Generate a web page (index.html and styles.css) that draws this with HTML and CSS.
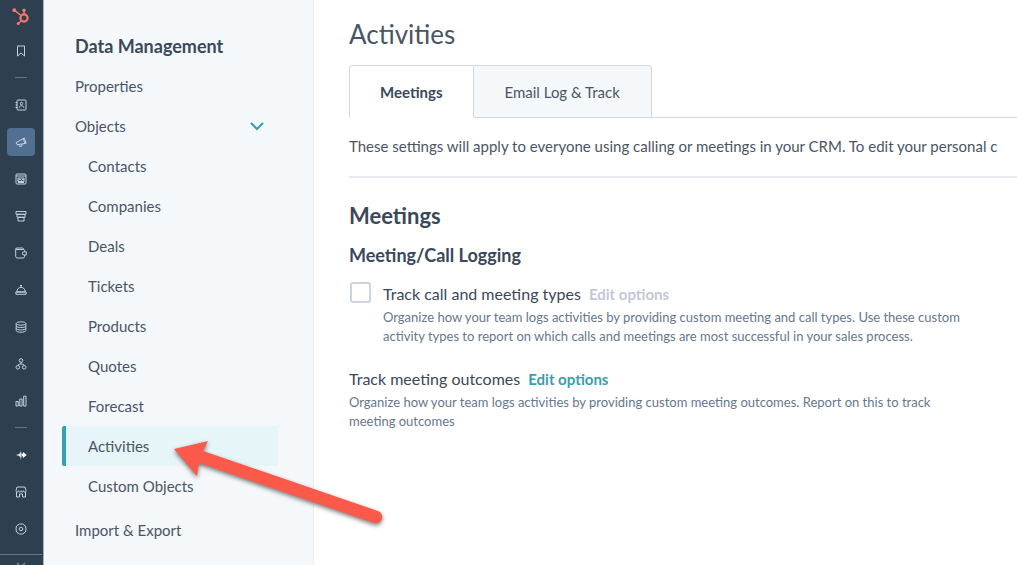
FILE: index.html
```html
<!DOCTYPE html>
<html lang="en">
<head>
    <meta charset="UTF-8">
    <meta name="viewport" content="width=device-width, initial-scale=1.0">
    <title>Activities - Data Management</title>
    <link rel="stylesheet" href="styles.css">
</head>
<body>
    <div class="app">
        <nav class="rail" aria-label="Main">
            <a class="logo" href="#" aria-label="Home">
                <svg width="18" height="18" viewBox="0 0 18 18" fill="none" stroke="#f8766a">
                    <circle cx="12" cy="10" r="3.6" stroke-width="2.2"/>
                    <path d="M12 6.2V2.5M9 7.5L2.5 2.3M9.3 12.8L6.5 15.2" stroke-width="1.5"/>
                    <g fill="#f8766a" stroke="none"><circle cx="12" cy="2.2" r="1.7"/><circle cx="2.3" cy="2.2" r="1.9"/><circle cx="6.2" cy="15.6" r="1.5"/></g>
                </svg>
            </a>
            <a class="rail-item" href="#" aria-label="Bookmarks"><svg class="icon" viewBox="0 0 12 12"><path d="M2.5 1h7v10L6 8 2.5 11z"/></svg></a>
            <hr class="rail-divider">
            <a class="rail-item" href="#" aria-label="CRM"><svg class="icon" viewBox="0 0 12 12"><rect x="2" y="1" width="9" height="10" rx="1"/><circle cx="6.5" cy="4.5" r="1.2"/><path d="M4.2 8.8c.2-2.8 4.4-2.8 4.600 0M.5 3.500h2M.5 6h2M.5 8.500h2"/></svg></a>
            <a class="rail-item" href="#" aria-label="Marketing"><span class="rail-active"><svg class="icon" viewBox="0 0 12 12"><path d="M1 6.600L9.300 2l1.900 5.300-9.100 1.400zM4 8.500l.6 2 2.500-.6-.4-1.800M8.300 2.700l1.600 4.700"/></svg></span></a>
            <a class="rail-item" href="#" aria-label="Content"><svg class="icon" viewBox="0 0 12 12"><rect x="1" y="1" width="10" height="10" rx="1"/><path d="M1 3h10M3 8.500V5h6v3.500zM3 8l2-2 1.500 1.500L8 6l1 1M3 9.500h6"/></svg></a>
            <a class="rail-item" href="#" aria-label="Sales"><svg class="icon" viewBox="0 0 12 12"><path d="M1 1.500h10v2.800H1zM2 4.300h8v3H2zM3 7.300h6V11H3z"/></svg></a>
            <a class="rail-item" href="#" aria-label="Commerce"><svg class="icon" viewBox="0 0 12 12"><path d="M9.500 4.800V3.500Q9.500 2.500 8.500 2.500H2Q.7 2.500.7 1.700M8.500 2.500Q8.500 1 7.500 1H2Q.7 1 .7 2.200v7.300Q.7 11 2.200 11h6q1.300 0 1.300-1.500V8M11.300 4.800H9a1.600 1.600 0 0 0 0 3.200h2.300z"/></svg></a>
            <a class="rail-item" href="#" aria-label="Service"><svg class="icon" viewBox="0 0 12 12"><path d="M1.800 8C2 1.800 10 1.800 10.200 8zM.9 8h10.200v2.300H.9zM6 3.200V1.500M5 1.500h2"/></svg></a>
            <a class="rail-item" href="#" aria-label="Data"><svg class="icon" viewBox="0 0 12 12"><ellipse cx="6" cy="2.500" rx="4.800" ry="1.700"/><path d="M1.200 2.500v7C1.200 11.800 10.800 11.800 10.800 9.500v-7M1.200 5c0 2 9.600 2 9.600 0M1.200 7.400c0 2 9.600 2 9.600 0"/></svg></a>
            <a class="rail-item" href="#" aria-label="Automation"><svg class="icon" viewBox="0 0 12 12"><circle cx="6" cy="2.500" r="1.800"/><circle cx="2.800" cy="9.300" r="1.800"/><circle cx="9.200" cy="9.300" r="1.800"/><path d="M6 4.300v1.700M2.800 7.500C3 6.200 4.500 6 6 6s3 .2 3.200 1.500"/></svg></a>
            <a class="rail-item" href="#" aria-label="Reporting"><svg class="icon" viewBox="0 0 12 12"><path d="M1 6.500h2.300V11H1zM4.800 4h2.300v7H4.800zM8.700 1.200H11V11H8.700z"/></svg></a>
            <hr class="rail-divider">
            <a class="rail-item" href="#" aria-label="Assistant"><svg class="icon" viewBox="0 0 12 12"><path class="solid" d="M5.800 0C5.800 4.800 4.500 5.500.5 6c4 .5 5.300 1.200 5.300 6zM6.500 2v8C6.700 8 7.200 7.200 8 7v2l3.800-3L8 3v2C7.200 4.800 6.700 4 6.500 2z"/></svg></a>
            <a class="rail-item" href="#" aria-label="Marketplace"><svg class="icon" viewBox="0 0 12 12"><path d="M2 1h8l1 3.500c0 2-2.500 2-2.500.2 0 1.800-2.500 1.800-2.500 0 0 1.800-2.500 1.800-2.500 0C3.500 6.500 1 6.500 1 4.500zM1.500 6v5h3V8h3v3h3V6"/></svg></a>
            <a class="rail-item" href="#" aria-label="Settings"><svg class="icon" viewBox="0 0 12 12"><path d="M4.500 1h3L10.500 3 11 6l-.5 3-3 2h-3l-3-2L1 6l.5-3z"/><circle cx="6" cy="6" r="1.800"/></svg></a>
            <button class="rail-toggle" type="button" aria-label="Expand menu">
                <svg width="10" height="8" viewBox="0 0 10 8" fill="none" stroke="#6c87a3" stroke-width="1.500"><path d="M1 1l4 4 4-4"/></svg>
            </button>
        </nav>

        <aside class="sidebar">
            <h2 class="sidebar-title">Data Management</h2>
            <a class="nav-link" href="#">Properties</a>
            <a class="nav-link" href="#">Objects
                <svg class="chevron" width="14" height="9" viewBox="0 0 14 9"><path d="M1.500 1.500L7 7l5.500-5.500"/></svg>
            </a>
            <div class="subnav">
                <a class="nav-link" href="#">Contacts</a>
                <a class="nav-link" href="#">Companies</a>
                <a class="nav-link" href="#">Deals</a>
                <a class="nav-link" href="#">Tickets</a>
                <a class="nav-link" href="#">Products</a>
                <a class="nav-link" href="#">Quotes</a>
                <a class="nav-link" href="#">Forecast</a>
                <a class="nav-link active" href="#">Activities</a>
                <a class="nav-link" href="#">Custom Objects</a>
            </div>
            <a class="nav-link" href="#">Import &amp; Export</a>
        </aside>

        <main class="content">
            <h1>Activities</h1>
            <div class="tabs" role="tablist">
                <button class="tab selected" type="button" role="tab" aria-selected="true">Meetings</button>
                <button class="tab" type="button" role="tab" aria-selected="false">Email Log &amp; Track</button>
            </div>
            <p class="intro">These settings will apply to everyone using calling or meetings in your CRM. To edit your personal c</p>

            <h2>Meetings</h2>
            <h3>Meeting/Call Logging</h3>
            <div class="setting with-check">
                <input type="checkbox" id="track-types">
                <div class="setting-body">
                    <div class="setting-head">
                        <label for="track-types">Track call and meeting types</label>
                        <button class="edit" type="button" disabled>Edit options</button>
                    </div>
                    <p class="help">Organize how your team logs activities by providing custom meeting and call types. Use these custom activity types to report on which calls and meetings are most successful in your sales process.</p>
                </div>
            </div>
            <div class="setting">
                <div class="setting-head">
                    <span>Track meeting outcomes</span>
                    <button class="edit" type="button">Edit options</button>
                </div>
                <p class="help">Organize how your team logs activities by providing custom meeting outcomes. Report on this to track meeting outcomes</p>
            </div>
        </main>

        <svg class="arrow" width="220" height="96" viewBox="0 0 220 96" aria-hidden="true">
            <path d="M4 12L38 4l-5 10L208 74a6 6 0 0 1-4 12L29 26l-2 13z"/>
        </svg>
    </div>
</body>
</html>
```
FILE: styles.css
```css
* {
    box-sizing: border-box;
}

body {
    margin: 0;
    font-family: Lato, "Liberation Sans", sans-serif;
    font-size: 15px;
    color: #4a5564;
    background: #fff;
}

h1, h2, h3, p {
    margin: 0;
}

a {
    color: inherit;
    text-decoration: none;
}

button {
    font-family: inherit;
    font-size: inherit;
    border: none;
    background: none;
    padding: 0;
    cursor: pointer;
}

.app {
    display: flex;
    position: relative;
    height: 100vh;
    overflow: hidden;
}

/* dark icon rail */
.rail {
    display: flex;
    flex-direction: column;
    align-items: center;
    flex: 0 0 44px;
    padding-right: 1px;
    background: #2e3f50;
    border-right: 1px solid #a5b1bd;
}

.logo {
    display: flex;
    align-items: center;
    justify-content: center;
    height: 32px;
    padding-top: 2px;
}

.rail-item {
    display: flex;
    align-items: center;
    justify-content: center;
    width: 100%;
    height: 37px;
}

.rail-active {
    display: flex;
    align-items: center;
    justify-content: center;
    width: 28px;
    height: 28px;
    border-radius: 4px;
    background: #516f90;
}

.icon {
    width: 12px;
    height: 12px;
    fill: none;
    stroke: #c5d0da;
    stroke-width: 1;
    stroke-linejoin: round;
}

.icon .solid {
    fill: #fff;
    stroke: none;
}

.rail-divider {
    width: 12px;
    height: 1px;
    margin: 8px 0;
    border: none;
    background: #64788b;
}

.rail-toggle {
    width: 100%;
    height: 11px;
    margin-top: auto;
    border-top: 1px solid #64788b;
    overflow: hidden;
}

.rail-toggle svg {
    display: block;
    margin: 7px auto 0;
}

/* settings navigation */
.sidebar {
    flex: 0 0 270px;
    padding: 26px 35px 0 18px;
    background: #f4f8fb;
    border-right: 1px solid #e9eef3;
}

.sidebar-title {
    padding-left: 13px;
    font-size: 18px;
    line-height: 40px;
    color: #3a4859;
}

.nav-link {
    display: flex;
    align-items: center;
    justify-content: space-between;
    height: 40px;
    padding: 0 14px 0 13px;
}

.subnav {
    margin-bottom: 4px;
}

.subnav .nav-link {
    padding-left: 26px;
}

.subnav .active {
    padding-left: 22px;
    border-left: 4px solid #2fa3b5;
    border-radius: 2px;
    background: #e5f5f8;
}

.chevron path {
    fill: none;
    stroke: #3a9dac;
    stroke-width: 2;
    stroke-linecap: round;
}

/* page content */
.content {
    flex: 1;
    min-width: 0;
    padding: 16px 0 0 35px;
}

h1 {
    font-size: 26px;
    font-weight: 400;
    line-height: 36px;
}

.tabs {
    display: flex;
    margin-top: 13px;
    border-bottom: 1px solid #d0d8e0;
}

.tab {
    height: 53px;
    margin-bottom: -1px;
    padding: 0 31px;
    border: 1px solid #d0d8e0;
    border-left: none;
    border-radius: 0 4px 0 0;
    background: #f4f8fb;
    color: #4a5564;
}

.tab.selected {
    padding: 0 30px;
    border-left: 1px solid #d0d8e0;
    border-bottom-color: #fff;
    border-radius: 4px 0 0 0;
    background: #fff;
    color: #3a4859;
    font-weight: 700;
}

.intro {
    padding: 16px 0 18px;
    border-bottom: 2px solid #e7eaee;
    line-height: 24px;
    white-space: nowrap;
}

.content h2 {
    margin-top: 24px;
    font-size: 22px;
    line-height: 28px;
    color: #3a4859;
}

.content h3 {
    margin-top: 13px;
    font-size: 18px;
    line-height: 24px;
    color: #3a4859;
}

.setting {
    max-width: 625px;
    margin-top: 21px;
}

.with-check {
    display: flex;
    gap: 12px;
    margin-top: 15px;
}

.with-check input {
    appearance: none;
    flex: none;
    width: 21px;
    height: 21px;
    margin: 0 0 0 1px;
    border: 2px solid #ccd5df;
    border-radius: 3px;
    background: #fff;
}

.setting-head {
    display: flex;
    align-items: center;
    gap: 8px;
    font-size: 16px;
    line-height: 24px;
    color: #3a4859;
}

.edit {
    font-size: 15px;
    font-weight: 700;
    color: #3a9dac;
}

.edit:disabled {
    color: #bfc9d5;
    cursor: default;
}

.help {
    margin-top: 2px;
    font-size: 13px;
    line-height: 19px;
    color: #66788b;
}

.arrow {
    position: absolute;
    top: 437px;
    left: 170px;
    fill: #fb5a4b;
    filter: drop-shadow(0 2px 2px rgba(0, 0, 0, 0.5));
}
```
